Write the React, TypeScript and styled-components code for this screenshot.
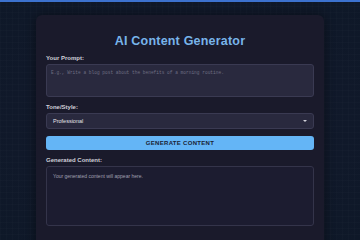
import React from 'react';
import styled, { createGlobalStyle } from 'styled-components';

const GlobalStyle = createGlobalStyle`
  html, body {
    margin: 0;
    padding: 0;
    height: 100%;
  }

  body {
    font-family: "Liberation Sans", Arial, sans-serif;
    background-color: #0f1828;
    background-image:
      linear-gradient(rgba(255, 255, 255, 0.012) 1px, transparent 1px),
      linear-gradient(90deg, rgba(255, 255, 255, 0.012) 1px, transparent 1px),
      radial-gradient(ellipse at center, #141a2e 0%, #0e1828 100%);
    background-size: 6px 6px, 6px 6px, 100% 100%;
    overflow: hidden;
  }
`;

const Page = styled.div`
  width: 360px;
  height: 240px;
  overflow: hidden;
  border-top: 2px solid #3c72cf;
  box-sizing: border-box;
  display: flex;
  justify-content: center;
  padding-top: 13px;
`;

const Card = styled.div`
  width: 288px;
  height: 240px;
  flex-shrink: 0;
  box-sizing: border-box;
  padding: 18px 10px 0;
  background: #1a1a2b;
  border-radius: 6px;
  box-shadow: 0 0 12px rgba(0, 0, 0, 0.45);
  display: flex;
  flex-direction: column;
`;

const Title = styled.h1`
  margin: 0 0 5px;
  text-align: center;
  font-size: 12.5px;
  line-height: 16px;
  font-weight: 700;
  color: #78b4ea;
  letter-spacing: 0.2px;
`;

const Label = styled.label`
  display: block;
  font-size: 6px;
  line-height: 8px;
  font-weight: 700;
  color: #cfcfd8;
  margin-bottom: 2px;
`;

const Field = styled.div`
  margin-bottom: 6px;
`;

const PromptBox = styled.div`
  height: 33px;
  box-sizing: border-box;
  padding: 4px 4px;
  background: #29293e;
  border: 1px solid #3a3a52;
  border-radius: 3px;
  font-family: "Liberation Mono", "DejaVu Sans Mono", monospace;
  font-size: 4.5px;
  line-height: 7px;
  color: #6e6e82;
`;

const Select = styled.div`
  height: 16px;
  box-sizing: border-box;
  padding: 0 6px;
  background: #29293e;
  border: 1px solid #3a3a52;
  border-radius: 3px;
  display: flex;
  align-items: center;
  justify-content: space-between;
  font-size: 5.5px;
  color: #e4e4ea;
`;

const Caret = styled.span`
  width: 0;
  height: 0;
  border-left: 2px solid transparent;
  border-right: 2px solid transparent;
  border-top: 2.5px solid #d0d0d8;
`;

const Button = styled.button`
  display: block;
  width: 100%;
  height: 14px;
  margin: 1px 0 6px;
  padding: 0;
  border: none;
  border-radius: 3px;
  background: #64b5f6;
  color: #1a1f33;
  font-family: "Liberation Sans", Arial, sans-serif;
  font-size: 6px;
  font-weight: 700;
  letter-spacing: 0.3px;
`;

const Output = styled.div`
  height: 60px;
  box-sizing: border-box;
  padding: 6px 6px;
  background: #1c1c30;
  border: 1px solid #34344a;
  border-radius: 3px;
  font-size: 5px;
  line-height: 7px;
  color: #a0a0b0;
`;

const App: React.FC = () => {
  return (
    <Page>
      <GlobalStyle />
      <Card>
        <Title>AI Content Generator</Title>
        <Field>
          <Label>Your Prompt:</Label>
          <PromptBox>E.g., Write a blog post about the benefits of a morning routine.</PromptBox>
        </Field>
        <Field>
          <Label>Tone/Style:</Label>
          <Select>
            <span>Professional</span>
            <Caret />
          </Select>
        </Field>
        <Button>GENERATE CONTENT</Button>
        <Label>Generated Content:</Label>
        <Output>Your generated content will appear here.</Output>
      </Card>
    </Page>
  );
};

export default App;
